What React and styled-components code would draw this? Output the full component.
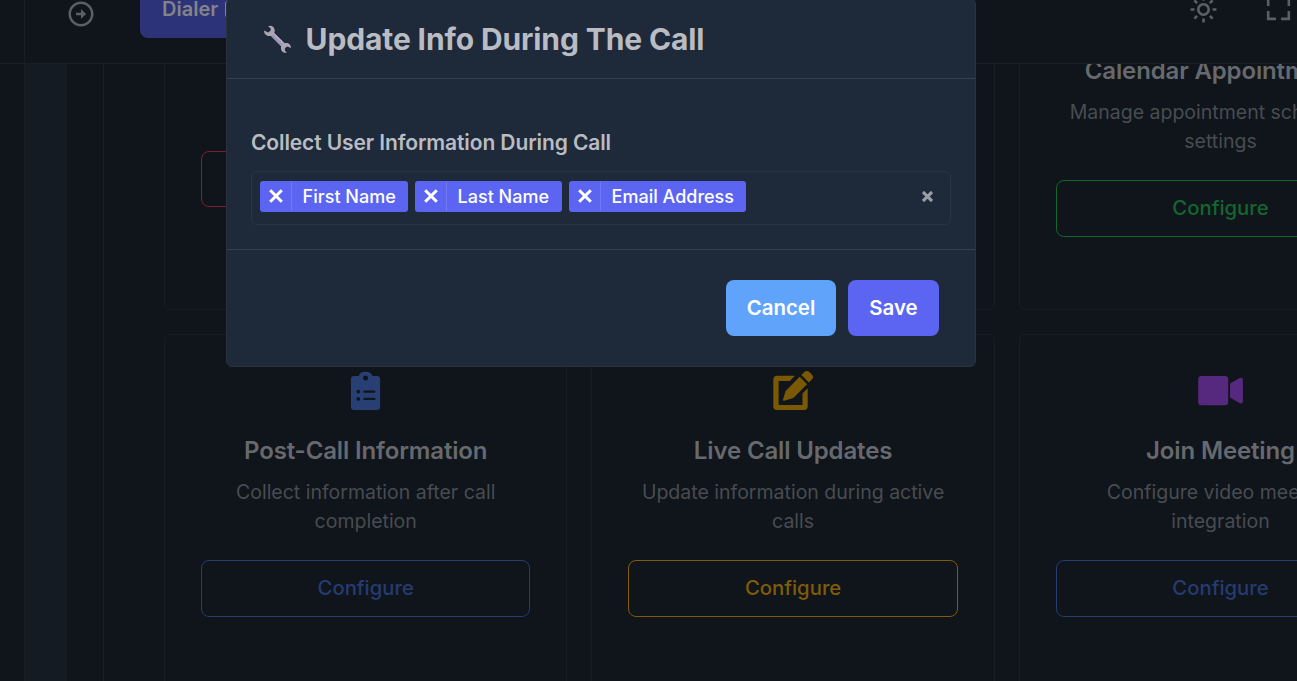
import React from "react";
import styled, { createGlobalStyle } from "styled-components";
import { BiRightArrowCircle, BiSun, BiFullscreen } from "react-icons/bi";

const GlobalStyle = createGlobalStyle`
  *, *::before, *::after { box-sizing: border-box; }
  body {
    margin: 0;
    background: #10141b;
    font-family: Inter, "Liberation Sans", sans-serif;
    overflow: hidden;
  }
  button { font-family: inherit; margin: 0; }
`;

const Shell = styled.div`
  position: relative;
  display: grid;
  grid-template-columns: 25px 1fr;
  width: 1297px;
  height: 681px;
  overflow: hidden;
  background: #10141b;
`;

const Sidebar = styled.aside`
  border-right: 1px solid #191e25;
`;

const Main = styled.main`
  display: flex;
  flex-direction: column;
  min-width: 0;
  height: 681px;
`;

const TopBar = styled.header`
  display: flex;
  align-items: flex-start;
  flex: none;
  height: 64px;
  margin-left: -25px;
  padding-left: 65.5px;
  border-bottom: 1px solid #1a1f26;
  color: #5c6064;
`;

const BarIcon = styled.span`
  display: flex;
  flex: none;
  margin-top: ${(p) => p.$top}px;
  margin-right: ${(p) => p.$gap || 0}px;
`;

const DialerButton = styled.button`
  display: flex;
  align-items: center;
  gap: 7px;
  flex: none;
  width: 180px;
  height: 46px;
  margin-top: -8px;
  padding: 0 0 12px 22px;
  border: 0;
  border-radius: 8px;
  background: #2d3379;
  color: #828488;
  font-size: 20px;
  font-weight: 600;
  line-height: 26px;
  text-align: left;
`;

const BarTools = styled.div`
  display: flex;
  flex: none;
  margin-left: auto;
  margin-right: 3px;
`;

const Body = styled.div`
  display: flex;
  flex: 1;
  min-height: 0;
  overflow: hidden;
`;

const Rail = styled.div`
  flex: none;
  width: 42px;
  background: #141b23;
`;

const Panel = styled.section`
  flex: none;
  width: 1500px;
  margin-left: 36px;
  padding-left: 60px;
  border-left: 1px solid #191d24;
`;

const CardGrid = styled.div`
  display: grid;
  grid-template-columns: repeat(3, 403.4px);
  grid-auto-rows: 356px;
  gap: 24px;
  margin-top: -110px;
`;

const Card = styled.article`
  display: flex;
  flex-direction: column;
  align-items: center;
  padding: 36px;
  border: 1px solid #181d24;
  border-radius: 6px;
  text-align: center;
`;

const CardIcon = styled.div`
  display: flex;
  height: 40px;
`;

const CardTitle = styled.h3`
  margin: 24px 0 0;
  color: #66696d;
  font-size: 24px;
  font-weight: 600;
  line-height: 32px;
  letter-spacing: -0.14px;
  white-space: nowrap;
`;

const CardText = styled.p`
  margin: 10.5px 0 0;
  color: #484c51;
  font-size: 19.5px;
  line-height: 29.25px;
`;

const ConfigureButton = styled.button`
  flex: none;
  width: 100%;
  height: 56.8px;
  margin-top: 23.8px;
  padding: 0 0 1px;
  border: 1px solid ${(p) => p.$color};
  border-radius: 8px;
  background: transparent;
  color: ${(p) => p.$color};
  font-size: 20.3px;
  font-weight: 500;
`;

const Modal = styled.div`
  position: absolute;
  top: -2px;
  left: 226px;
  display: flex;
  flex-direction: column;
  width: 750px;
  height: 369px;
  border: 1px solid #2a323c;
  border-radius: 6px;
  background: #1e293a;
`;

const ModalHeader = styled.div`
  display: flex;
  align-items: center;
  gap: 13.6px;
  height: 80px;
  padding: 1px 36px 0;
  border-bottom: 1px solid #364051;
`;

const ModalTitle = styled.h2`
  margin: 0;
  color: #b9bcc2;
  font-size: 30px;
  font-weight: 700;
  line-height: 40px;
  letter-spacing: -0.12px;
  white-space: nowrap;
`;

const ModalBody = styled.div`
  height: 171px;
  padding: 49px 24px 0;
  border-bottom: 1px solid #364051;
`;

const FieldLabel = styled.label`
  display: block;
  color: #b9bcc2;
  font-size: 21px;
  font-weight: 600;
  line-height: 30px;
  letter-spacing: -0.11px;
`;

const MultiSelect = styled.div`
  display: flex;
  align-items: center;
  gap: 7px;
  height: 54px;
  margin-top: 13px;
  padding: 0 17.5px 3px 8px;
  border: 1px solid #2a3445;
  border-radius: 6px;
`;

const Tag = styled.span`
  display: flex;
  align-items: center;
  height: 31px;
  width: ${(p) => p.$width}px;
  border-radius: 3px;
  background: #5b65f2;
  color: #fff;
  font-size: 18px;
  font-weight: 500;
`;

const TagRemove = styled.span`
  display: flex;
  align-items: center;
  justify-content: center;
  flex: none;
  width: 32px;
  height: 29px;
  padding-bottom: 2px;
  border-right: 1px solid #7179f4;
`;

const TagLabel = styled.span`
  padding-left: 10.6px;
  white-space: nowrap;
`;

const ClearAll = styled.span`
  display: flex;
  margin-left: auto;
  color: #9a9ea6;
`;

const ModalFooter = styled.div`
  display: flex;
  justify-content: flex-end;
  gap: 12px;
  padding: 30px 36px 0;
`;

const ActionButton = styled.button`
  width: ${(p) => p.$width}px;
  height: 56px;
  padding: 0 0 1px;
  border: 0;
  border-radius: 8px;
  background: ${(p) => p.$bg};
  color: #fff;
  font-size: 20.4px;
  font-weight: 600;
`;

const Cross = ({ size, weight }) => (
  <svg width={size} height={size} viewBox="0 0 14 14" stroke="currentColor" strokeWidth={weight}>
    <path d="M1.2 1.2 12.8 12.8M12.8 1.2 1.2 12.8" />
  </svg>
);

const PhoneIcon = () => (
  <svg width="12" height="17" viewBox="0 0 12 17">
    <rect width="12" height="16" rx="2.5" fill="#828488" />
  </svg>
);

const ClipboardIcon = () => (
  <svg width="31" height="40" viewBox="-0.5 0 31 40">
    <path
      fill="#273f73"
      fillRule="evenodd"
      d="M3.6 5H8.2a6.9 5.1 0 0 1 13.6 0h4.6A3.2 3.2 0 0 1 29.6 8.2v27.6a3.2 3.2 0 0 1-3.2 3.2H3.6A3.2 3.2 0 0 1 .4 35.8V8.2A3.2 3.2 0 0 1 3.6 5ZM15 4.6a2.5 2.5 0 1 0 0 5 2.5 2.5 0 0 0 0-5ZM7.8 18.7a1.9 1.9 0 1 0 0 3.8 1.9 1.9 0 0 0 0-3.8Zm0 7.3a1.9 1.9 0 1 0 0 3.8 1.9 1.9 0 0 0 0-3.8ZM14 19.4a1.2 1.2 0 0 0 0 2.4h9.8a1.2 1.2 0 0 0 0-2.4Zm0 7.3a1.2 1.2 0 0 0 0 2.4h9.8a1.2 1.2 0 0 0 0-2.4Z"
    />
  </svg>
);

const EditIcon = () => (
  <svg width="40" height="40" viewBox="0 0 40 40" fill="#7b5904">
    <path d="M4.3 4.7H22l-5.2 5.2H5.6v24H29.5V22.4l5.2-5.2V35.2a3.8 3.8 0 0 1-3.8 3.8H4.1a3.8 3.8 0 0 1-3.8-3.8V8.5a3.8 3.8 0 0 1 4-3.8Z" />
    <path d="M26.7 5.8 34.1 13.2 20.3 27 11.2 29.7a1 1 0 0 1-1.2-1.2l2.6-8.6Z" />
    <path d="M28.4 4.1 31.4 1.1a3.6 3.6 0 0 1 5 0l2.4 2.4a3.6 3.6 0 0 1 0 5l-3 3Z" />
  </svg>
);

const VideoIcon = () => (
  <svg width="45" height="40" viewBox="0 0 45 40" fill="#57297e">
    <rect x=".2" y="5" width="30" height="29.2" rx="3.2" />
    <path d="m32 12.6 9.4-5.4c1.6-1 3.5-.2 3.5 1.6v21.6c0 1.8-1.9 2.6-3.5 1.6L32 26.6Z" />
  </svg>
);

const WrenchIcon = () => (
  <svg width="29" height="29" viewBox="0 0 29 29">
    <path d="M8.2 8.2 21 21" stroke="#9f97b7" strokeWidth="4.6" />
    <path d="M9.6 7.4 21.6 19.4" stroke="#b5afc4" strokeWidth="1.4" />
    <path
      fill="#aaa7b3"
      d="M5 1.4C8-.1 11 1.6 11.6 4.6c.3 1.6-.1 3.1-1 4.3C8.9 11 6.3 11.6 4 10.5 2 9.7 1 7.7 1.1 5.6L5.2 7.4 7.8 5.4 7.5 3Z"
    />
    <path
      fill="#aaa7b3"
      d="M24 27.4C21.1 28.6 18.4 27 18 24c-.4-3.1 1.6-5.7 4.5-6 3-.4 5.6 1.7 5.5 5L24.2 21.6 21.8 23.2 22.1 26Z"
    />
  </svg>
);

const cards = [
  { title: "Call Disposition", text: "Manage call outcomes", color: "#7d202e" },
  { title: "Call Script", text: "Configure call scripts", color: "#273f73" },
  { title: "Calendar Appointments", text: "Manage appointment scheduling settings", color: "#13672d" },
  { title: "Post-Call Information", text: "Collect information after call completion", color: "#243c72", icon: <ClipboardIcon /> },
  { title: "Live Call Updates", text: "Update information during active calls", color: "#7f5c05", icon: <EditIcon /> },
  { title: "Join Meeting", text: "Configure video meeting integration", color: "#243c72", icon: <VideoIcon /> },
];

const tags = [
  { label: "First Name", width: 148 },
  { label: "Last Name", width: 147 },
  { label: "Email Address", width: 177 },
];

export default function App() {
  return (
    <>
      <GlobalStyle />
      <Shell>
        <Sidebar />
        <Main>
          <TopBar>
            <BarIcon $top={-1} $gap={44.5}><BiRightArrowCircle size={30} /></BarIcon>
            <DialerButton>
              Dialer
              <PhoneIcon />
            </DialerButton>
            <BarTools>
              <BarIcon $top={-6} $gap={44.5}><BiSun size={31} /></BarIcon>
              <BarIcon $top={-7}><BiFullscreen size={31} /></BarIcon>
            </BarTools>
          </TopBar>
          <Body>
            <Rail />
            <Panel>
              <CardGrid>
                {cards.map((c) => (
                  <Card key={c.title}>
                    <CardIcon>{c.icon}</CardIcon>
                    <CardTitle>{c.title}</CardTitle>
                    <CardText>{c.text}</CardText>
                    <ConfigureButton $color={c.color}>Configure</ConfigureButton>
                  </Card>
                ))}
              </CardGrid>
            </Panel>
          </Body>
        </Main>
        <Modal role="dialog">
          <ModalHeader>
            <WrenchIcon />
            <ModalTitle>Update Info During The Call</ModalTitle>
          </ModalHeader>
          <ModalBody>
            <FieldLabel>Collect User Information During Call</FieldLabel>
            <MultiSelect>
              {tags.map((t) => (
                <Tag key={t.label} $width={t.width}>
                  <TagRemove><Cross size={14} weight={3} /></TagRemove>
                  <TagLabel>{t.label}</TagLabel>
                </Tag>
              ))}
              <ClearAll><Cross size={11} weight={4} /></ClearAll>
            </MultiSelect>
          </ModalBody>
          <ModalFooter>
            <ActionButton $width={110} $bg="#60a3fa">Cancel</ActionButton>
            <ActionButton $width={91} $bg="#5b65f2">Save</ActionButton>
          </ModalFooter>
        </Modal>
      </Shell>
    </>
  );
}
